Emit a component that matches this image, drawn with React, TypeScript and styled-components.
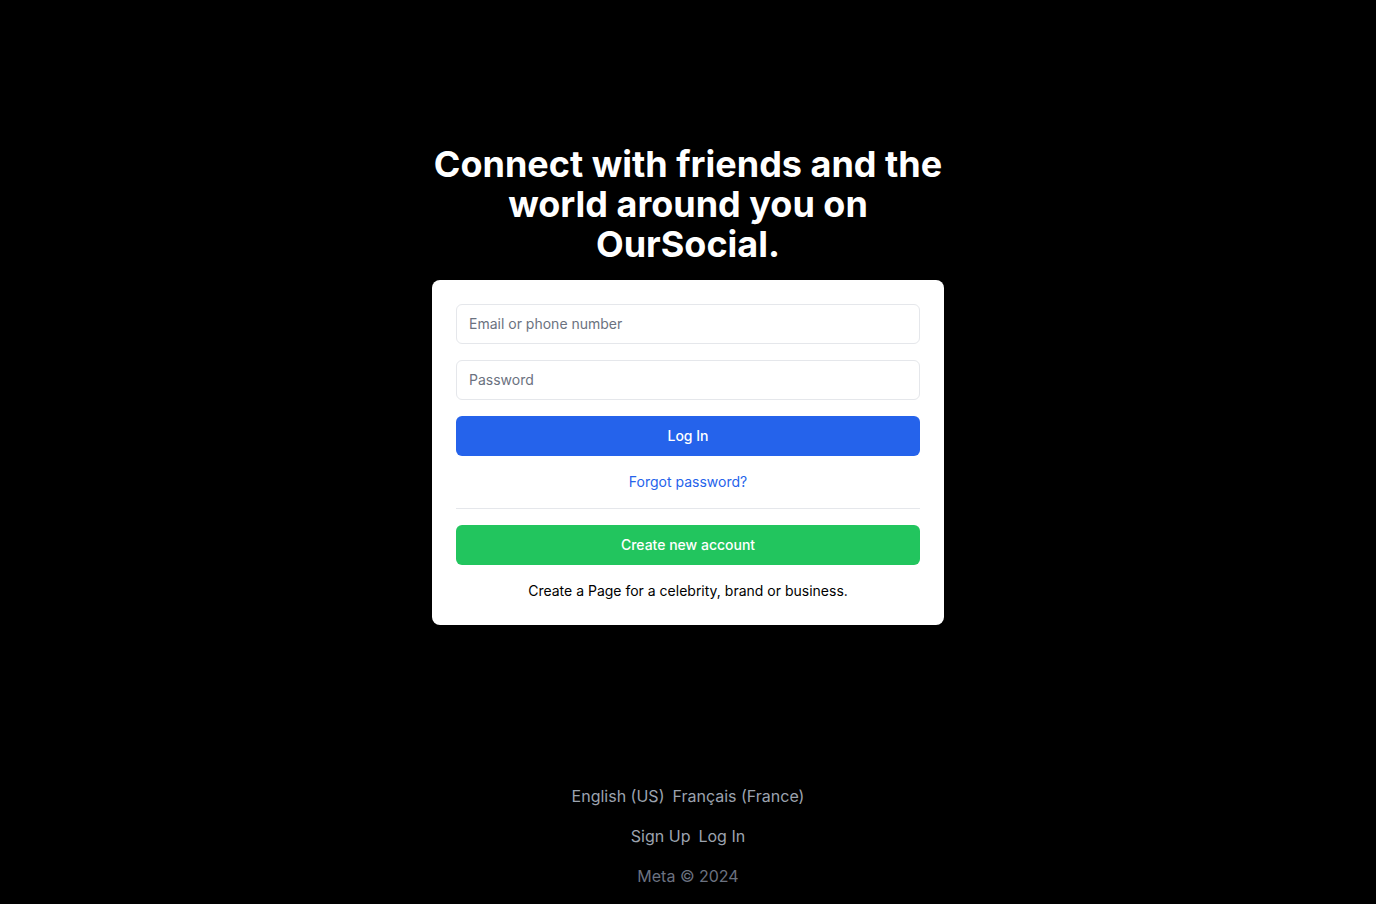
import React from "react";
import styled, { createGlobalStyle } from "styled-components";

const GlobalStyle = createGlobalStyle`
  * { box-sizing: border-box; }
  html, body { margin: 0; padding: 0; background: #000; }
  body { font-family: Inter, "Noto Sans", sans-serif; }
`;

const Page = styled.div`
  min-height: 100vh;
  display: flex;
  flex-direction: column;
  background: #000;
`;

const Main = styled.main`
  flex: 1;
  display: flex;
  flex-direction: column;
  align-items: center;
  justify-content: center;
  gap: 16px;
`;

const Heading = styled.h1`
  margin: 0;
  width: 512px;
  text-align: center;
  color: #fff;
  font-size: 36px;
  line-height: 40px;
  font-weight: 700;
`;

const Card = styled.div`
  width: 512px;
  background: #fff;
  border-radius: 8px;
  padding: 24px;
  display: flex;
  flex-direction: column;
  gap: 16px;
`;

const Input = styled.input`
  height: 40px;
  width: 100%;
  border: 1px solid #e5e7eb;
  border-radius: 6px;
  padding: 0 12px;
  font-family: inherit;
  font-size: 14px;
  color: #111827;
  outline: none;
  &::placeholder { color: #6b7280; }
`;

const Button = styled.button<{ $color: string }>`
  height: 40px;
  width: 100%;
  border: none;
  border-radius: 6px;
  background: ${(p) => p.$color};
  color: #fff;
  font-family: inherit;
  font-size: 14px;
  font-weight: 500;
  cursor: pointer;
`;

const LinkText = styled.a`
  display: block;
  text-align: center;
  font-size: 14px;
  line-height: 20px;
  color: #2563eb;
  text-decoration: none;
`;

const Divider = styled.hr`
  margin: 0;
  border: none;
  border-top: 1px solid #e5e7eb;
`;

const Note = styled.p`
  margin: 0;
  text-align: center;
  font-size: 14px;
  line-height: 20px;
  color: #000;
`;

const Footer = styled.footer`
  padding: 16px;
  display: flex;
  flex-direction: column;
  align-items: center;
  gap: 16px;
`;

const FooterRow = styled.div`
  display: flex;
  gap: 8px;
  font-size: 16px;
  line-height: 24px;
  color: #9ca3af;
`;

const Copy = styled.p`
  margin: 0;
  font-size: 16px;
  line-height: 24px;
  color: #6b7280;
`;

export default function App() {
  return (
    <>
      <GlobalStyle />
      <Page>
        <Main>
          <Heading>Connect with friends and the world around you on OurSocial.</Heading>
          <Card>
            <Input placeholder="Email or phone number" />
            <Input type="password" placeholder="Password" />
            <Button $color="#2563eb">Log In</Button>
            <LinkText href="#">Forgot password?</LinkText>
            <Divider />
            <Button $color="#22c55e">Create new account</Button>
            <Note>Create a Page for a celebrity, brand or business.</Note>
          </Card>
        </Main>
        <Footer>
          <FooterRow>
            <span>English (US)</span>
            <span>Français (France)</span>
          </FooterRow>
          <FooterRow>
            <span>Sign Up</span>
            <span>Log In</span>
          </FooterRow>
          <Copy>Meta © 2024</Copy>
        </Footer>
      </Page>
    </>
  );
}
